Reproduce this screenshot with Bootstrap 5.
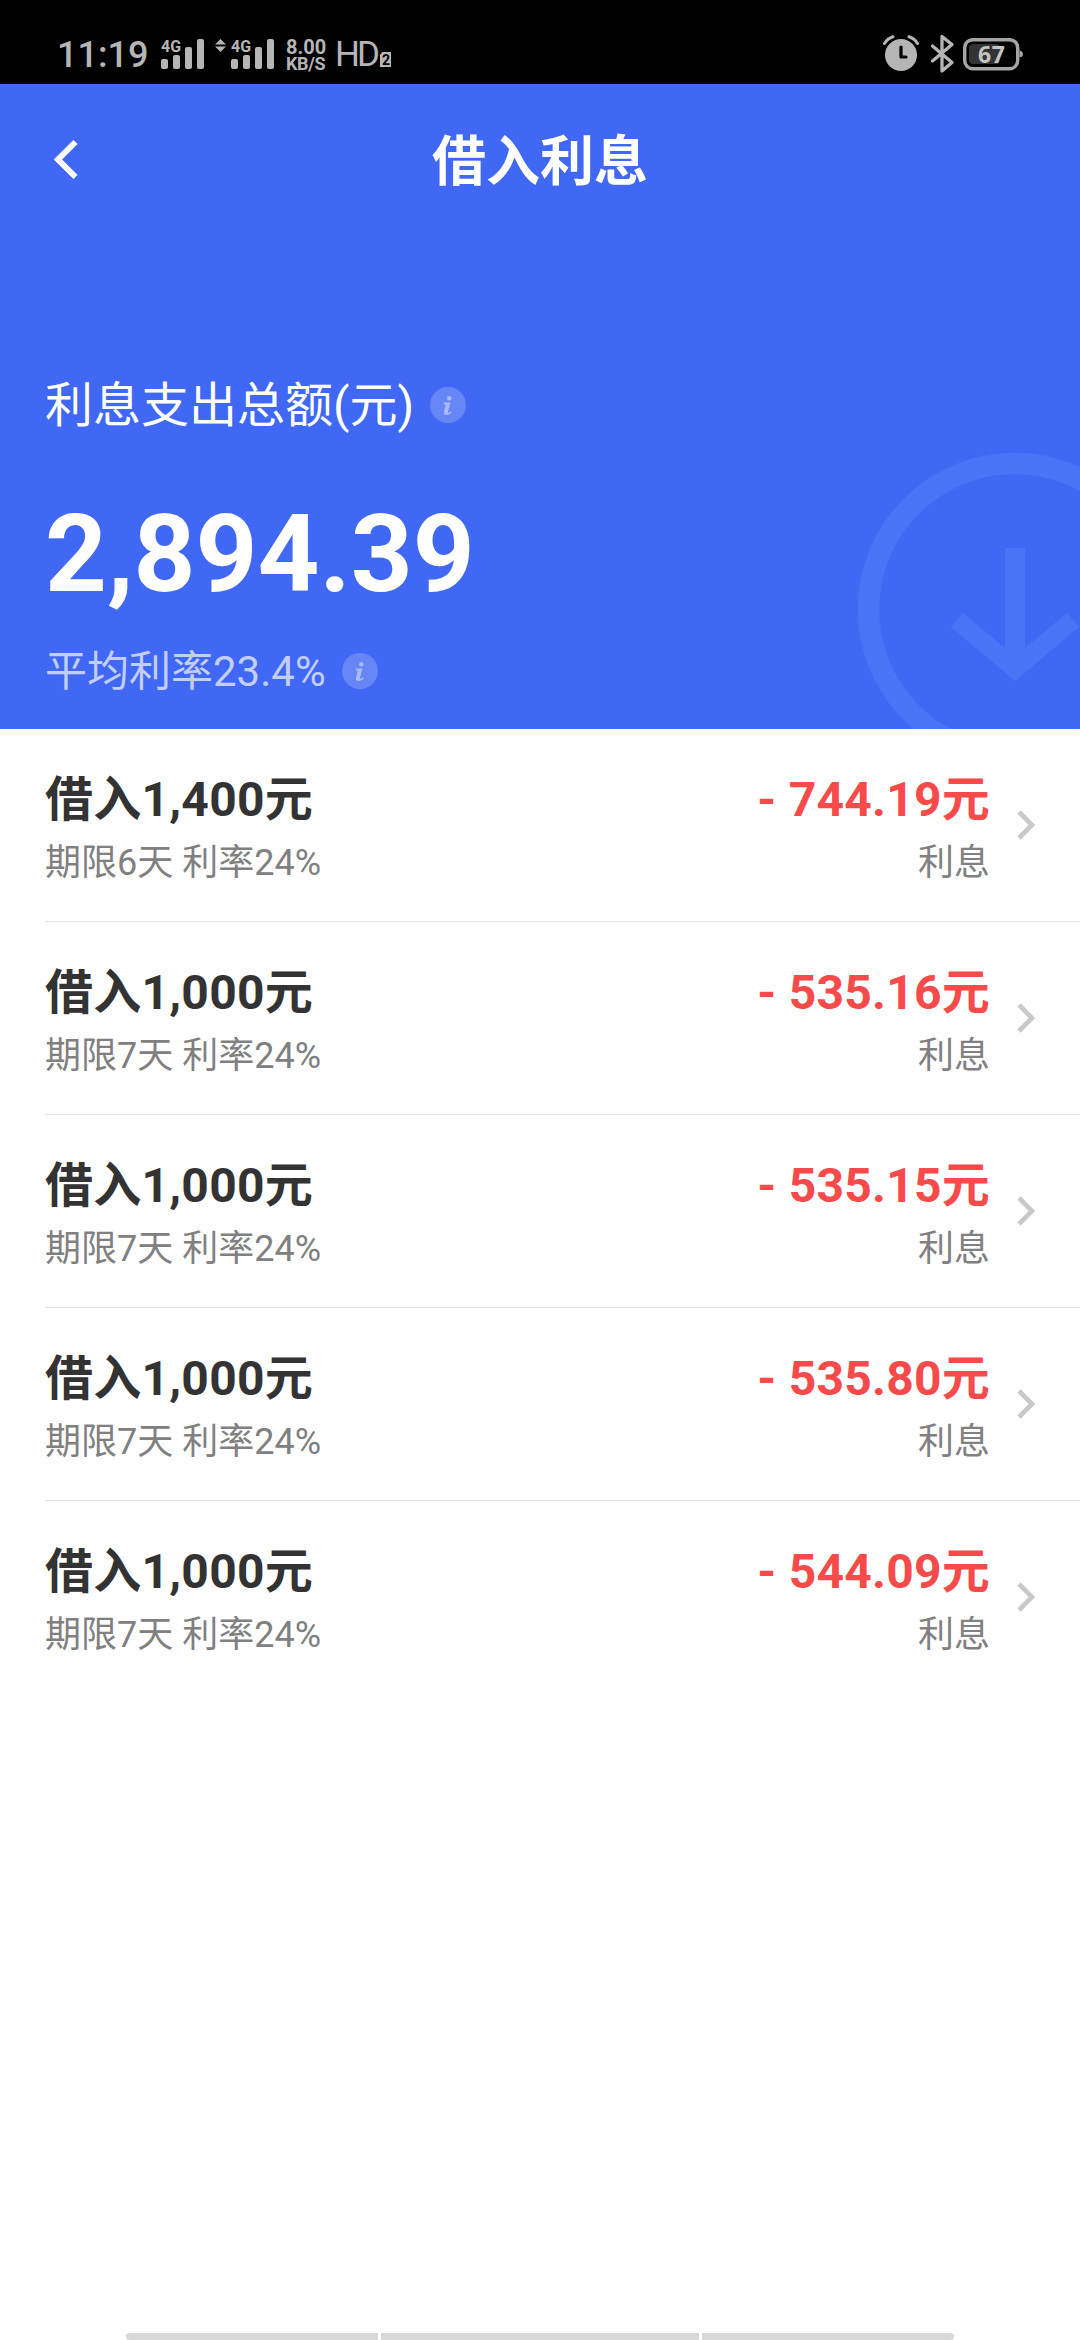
<!DOCTYPE html>
<html lang="zh-CN">
<head>
<meta charset="utf-8">
<meta name="viewport" content="width=device-width, initial-scale=1">
<title>借入利息</title>
<link href="https://cdn.jsdelivr.net/npm/bootstrap@5.3.0/dist/css/bootstrap.min.css" rel="stylesheet">
<style>
body{font-family:Roboto,"Noto Sans CJK SC",sans-serif;background:#fff;color:#333;width:1080px;height:2340px;overflow:hidden}
svg{display:block;flex:none}
.statusbar{height:84px;background:#000;color:#b5b5b5;padding:0 56px 0 57px}
.clock{font-size:36px;line-height:36px;width:104px;padding-top:2px;font-weight:500}
.speed{font-size:20px;line-height:18px;width:50px;font-weight:700;padding-top:1px}
.speed .unit{font-size:18px;line-height:16px;letter-spacing:-.4px}
.hdtag{font-size:35px;line-height:36px;width:45px;letter-spacing:-3px;padding-top:1px;margin-left:-1px}
.hero{height:645px;background:#4068f4;color:#fff}
.titlebar{height:152px}
.titlebar h1{font-size:54px;line-height:60px;font-weight:700;padding-top:6px}
.back{left:53px;top:55px}
.summary{padding:0 45px}
.total-label{font-size:48px;line-height:60px;margin-top:140px;gap:16px}
.total{font-size:108px;line-height:120px;font-weight:700;margin-top:58px}
.rate{font-size:42px;line-height:54px;margin-top:31px;gap:16px}
.rate span{color:#c2cefb}
.total-label svg,.rate svg{margin-top:-2px}
.watermark{right:0;bottom:0}
.loans{padding-left:45px}
.loan{height:193px;border-color:#e3e3e3!important;padding:41px 44px 0 0}
.loan h2{font-size:48px;line-height:60px;font-weight:700;letter-spacing:.25px}
.loan p{font-size:36px;line-height:48px;margin-top:9px;color:#808080}
.loan .cost{color:#f74b4b}
.go{margin:40px 0 0 26px}
.navhint{height:7px;width:828px;gap:3px;bottom:0;left:126px}
.navhint i{background:#d8d8d8;width:252px}
.navhint i:nth-child(2){width:318px}
.navhint i:first-child{border-radius:6px 0 0 6px}
.navhint i:last-child{border-radius:0 6px 6px 0}
</style>
</head>
<body class="position-relative">
<svg width="0" height="0" class="position-absolute">
  <defs>
    <g id="signal" fill="#b5b5b5">
      <rect x="0" y="20" width="7" height="10" rx="2"/><rect x="12" y="16" width="7" height="14" rx="2"/>
      <rect x="24" y="8" width="7" height="22" rx="2"/><rect x="36" y="0" width="7" height="30" rx="2"/>
    </g>
    <g id="info">
      <circle cx="18" cy="18" r="18" fill="#fff" fill-opacity=".2"/>
      <g fill="#a9bafa"><circle cx="19.3" cy="11.2" r="2.2"/><path d="M14 15.5h6.6l-2.7 9.4c-.3 1 .1 1.2 1.2.6l2.1-1 .5 1.2c-2.2 1.6-3.8 2.3-5.3 2.3-2.1 0-3-1.200-2.500-3.300l1.900-7.100h-2.200z"/></g>
    </g>
    <path id="chev" d="M3 2 16 15 3 28" fill="none" stroke="#c8c9cb" stroke-width="4.600"/>
  </defs>
</svg>

<header class="statusbar d-flex align-items-center justify-content-between">
  <div class="d-flex align-items-center pt-4">
    <div class="clock">11:19</div>
    <svg width="125" height="30" viewBox="0 0 125 30" fill="#b5b5b5" font-size="17" font-weight="700">
      <use href="#signal"/>
      <text x="0" y="12.500" textLength="20" lengthAdjust="spacingAndGlyphs">4G</text>
      <path d="M54 5.500 59.500 0 65 5.500zM54 7.500h11L59.500 13z"/>
      <use href="#signal" x="70"/>
      <text x="70" y="12.500" textLength="20" lengthAdjust="spacingAndGlyphs">4G</text>
    </svg>
    <div class="speed"><div>8.00</div><div class="unit">KB/S</div></div>
    <div class="hdtag">HD</div>
    <svg width="12" height="30" viewBox="0 0 12 30"><path d="M2.500 13H11v15H0V15.500z" fill="#b5b5b5"/><text x="2" y="26" font-size="14" font-weight="700" fill="#000">2</text></svg>
  </div>
  <svg class="mt-4" width="141" height="40" viewBox="0 0 141 40">
    <circle cx="18" cy="21" r="16" fill="#b5b5b5"/>
    <path d="M18 13v10h5" fill="none" stroke="#000" stroke-width="3.200" stroke-linecap="round" stroke-linejoin="round"/>
    <path d="M1.500 9.500Q4.500 4.500 10 2.800M34.500 9.500Q31.500 4.500 26 2.800" fill="none" stroke="#b5b5b5" stroke-width="3" stroke-linecap="round"/>
    <path d="M49.500 12 69 28.500 59 37V2.500L69 10.500 49.500 27" fill="none" stroke="#b5b5b5" stroke-width="3.300" stroke-linejoin="round" stroke-linecap="round"/>
    <rect x="81.700" y="5.700" width="53" height="29" rx="8" fill="none" stroke="#a5a5a5" stroke-width="3.400"/>
    <path d="M136.500 16.500q3.500.5 3.500 3.500t-3.500 3.500z" fill="#a5a5a5"/>
    <rect x="86" y="10" width="31" height="20" rx="4" fill="#333"/>
    <text x="95" y="29" font-size="23" font-weight="700" font-family="Noto Sans,sans-serif" fill="#c4c4c4" textLength="27">67</text>
  </svg>
</header>

<section class="hero position-relative overflow-hidden">
  <svg class="watermark position-absolute" width="224" height="277" viewBox="0 0 224 277">
    <g fill="none" stroke="#4b73f6"><circle cx="158.500" cy="157.500" r="146" stroke-width="21.500"/></g>
    <path d="M149 96h20v100l42-35 12 14-64 54-64-54 12-14 42 35z" fill="#4b73f6"/>
  </svg>
  <nav class="titlebar position-relative d-flex align-items-center justify-content-center">
    <svg class="back position-absolute" width="26" height="42" viewBox="0 0 26 42"><path d="M22.500 3 5 20.500 22.500 38" fill="none" stroke="#fff" stroke-width="6"/></svg>
    <h1 class="m-0">借入利息</h1>
  </nav>
  <div class="summary">
    <div class="total-label d-flex align-items-center">利息支出总额(元)<svg width="36" height="36"><use href="#info"/></svg></div>
    <div class="total">2,894.39</div>
    <div class="rate d-flex align-items-center"><span>平均利率23.4%</span><svg width="36" height="36"><use href="#info"/></svg></div>
  </div>
</section>

<main class="loans">
  <article class="loan d-flex align-items-start border-bottom">
    <div class="flex-grow-1"><h2 class="m-0">借入1,400元</h2><p class="mb-0">期限6天 利率24%</p></div>
    <div class="text-end"><h2 class="cost m-0">- 744.19元</h2><p class="mb-0">利息</p></div>
    <svg class="go" width="20" height="30"><use href="#chev"/></svg>
  </article>
  <article class="loan d-flex align-items-start border-bottom">
    <div class="flex-grow-1"><h2 class="m-0">借入1,000元</h2><p class="mb-0">期限7天 利率24%</p></div>
    <div class="text-end"><h2 class="cost m-0">- 535.16元</h2><p class="mb-0">利息</p></div>
    <svg class="go" width="20" height="30"><use href="#chev"/></svg>
  </article>
  <article class="loan d-flex align-items-start border-bottom">
    <div class="flex-grow-1"><h2 class="m-0">借入1,000元</h2><p class="mb-0">期限7天 利率24%</p></div>
    <div class="text-end"><h2 class="cost m-0">- 535.15元</h2><p class="mb-0">利息</p></div>
    <svg class="go" width="20" height="30"><use href="#chev"/></svg>
  </article>
  <article class="loan d-flex align-items-start border-bottom">
    <div class="flex-grow-1"><h2 class="m-0">借入1,000元</h2><p class="mb-0">期限7天 利率24%</p></div>
    <div class="text-end"><h2 class="cost m-0">- 535.80元</h2><p class="mb-0">利息</p></div>
    <svg class="go" width="20" height="30"><use href="#chev"/></svg>
  </article>
  <article class="loan d-flex align-items-start">
    <div class="flex-grow-1"><h2 class="m-0">借入1,000元</h2><p class="mb-0">期限7天 利率24%</p></div>
    <div class="text-end"><h2 class="cost m-0">- 544.09元</h2><p class="mb-0">利息</p></div>
    <svg class="go" width="20" height="30"><use href="#chev"/></svg>
  </article>
</main>
<div class="navhint position-absolute d-flex"><i></i><i></i><i></i></div>
<script src="https://cdn.jsdelivr.net/npm/bootstrap@5.3.0/dist/js/bootstrap.bundle.min.js"></script>
</body>
</html>
